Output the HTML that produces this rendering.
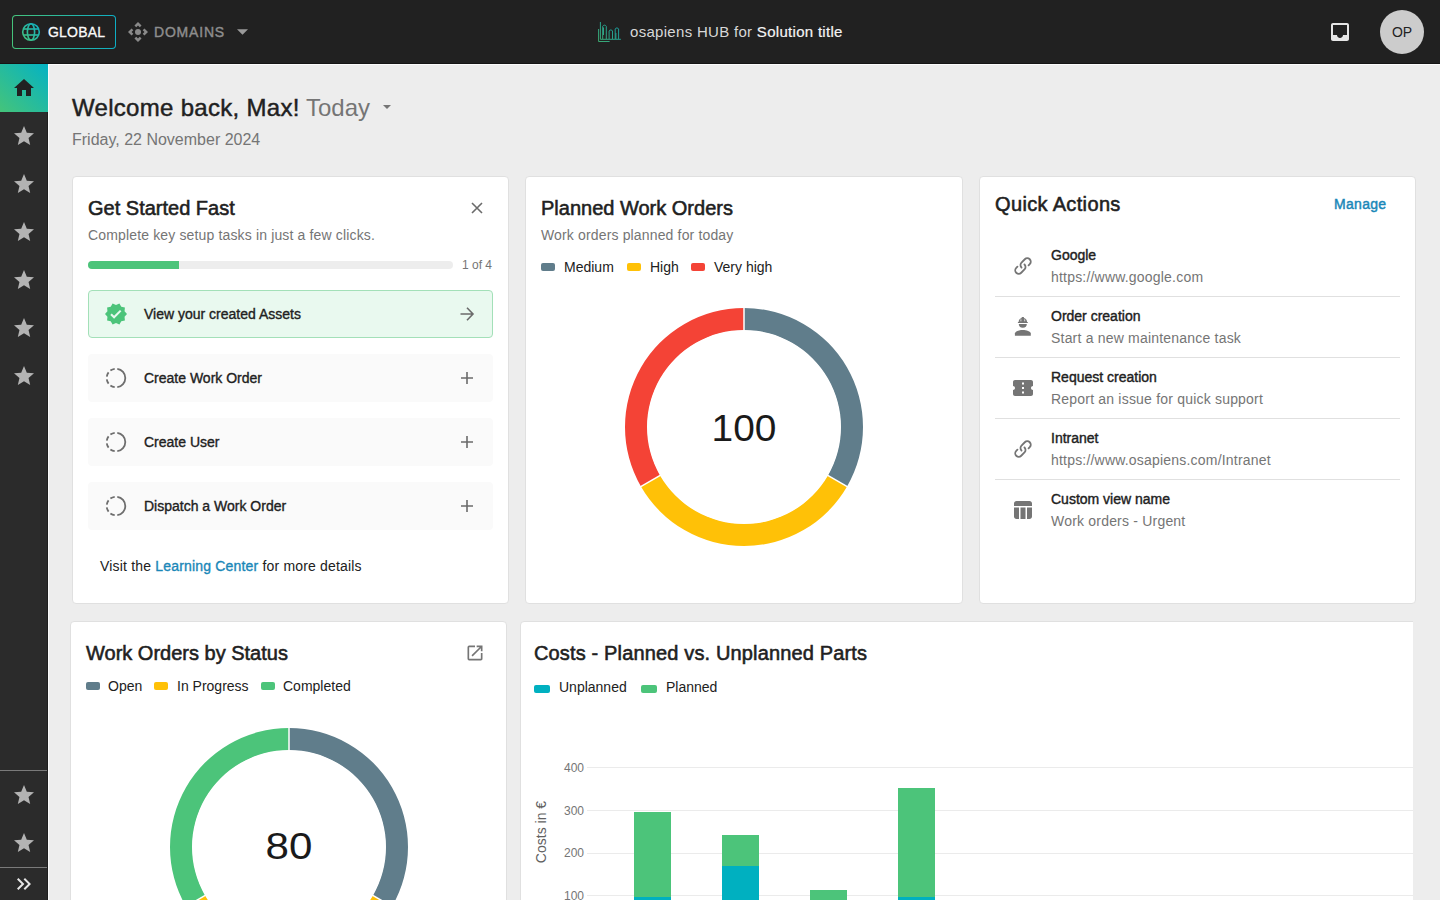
<!DOCTYPE html>
<html><head><meta charset="utf-8">
<style>
*{box-sizing:border-box;margin:0;padding:0}
html,body{width:1440px;height:900px;overflow:hidden;background:#ededed;font-family:"Liberation Sans",sans-serif;color:#212121}
.abs{position:absolute}
.t{position:absolute;white-space:nowrap;line-height:1}
#hdr{position:absolute;left:0;top:0;width:1440px;height:64px;background:#212121;border-bottom:1px solid #151515}
#side{position:absolute;left:0;top:64px;width:48px;height:836px;background:#2b2b2b;border-right:1px solid #1f1f1f}
#sideline{position:absolute;left:48px;top:64px;width:1px;height:836px;background:#fbfbfb}
#topline{position:absolute;left:48px;top:64px;width:1392px;height:1px;background:#fbfbfb}
.card{position:absolute;background:#fff;border:1px solid #e0e0e0;border-radius:4px;overflow:hidden}
.title{font-size:20px;color:#212121;-webkit-text-stroke:0.55px #212121}
.sub{font-size:14px;color:#757575;letter-spacing:0.15px}
.item{position:absolute;left:15px;width:405px;height:48px;border-radius:4px;background:#fafafa}
.itxt{font-size:14px;color:#212121;-webkit-text-stroke:0.35px #212121;letter-spacing:0px}
.sw{position:absolute;width:14px;height:8px;border-radius:2px}
.leg{font-size:14px;color:#212121}
.qt{font-size:14px;color:#212121;-webkit-text-stroke:0.4px #212121}
.qs{font-size:14px;color:#757575;letter-spacing:0.2px}
.div{position:absolute;left:15px;width:406px;height:1px;background:#e0e0e0}
</style></head>
<body>
<!-- HEADER -->
<div id="hdr">
  <div class="abs" style="left:12px;top:15px;width:104px;height:34px;border-radius:4px;padding:1px;background:linear-gradient(90deg,#46c37b,#0eaec4)">
    <div style="width:100%;height:100%;background:#212121;border-radius:3px"></div>
  </div>
  <svg class="abs" style="left:21px;top:22px" width="20" height="20" viewBox="0 0 20 20">
    <defs><linearGradient id="gg" gradientUnits="userSpaceOnUse" x1="2" y1="18" x2="18" y2="2"><stop offset="0" stop-color="#46c37b"/><stop offset="1" stop-color="#0eaec4"/></linearGradient></defs>
    <g fill="none" stroke="url(#gg)" stroke-width="1.6">
      <circle cx="10" cy="10" r="8.3"/>
      <ellipse cx="10" cy="10" rx="3.6" ry="8.3"/>
      <line x1="2" y1="7" x2="18" y2="7"/><line x1="2" y1="13" x2="18" y2="13"/>
    </g>
  </svg>
  <div class="t" style="left:48px;top:25px;font-size:14px;color:#fafafa;-webkit-text-stroke:0.3px #fafafa;letter-spacing:0.2px">GLOBAL</div>
  <svg class="abs" style="left:126px;top:20px" width="24" height="24" viewBox="0 0 24 24"><path fill="#8a8a8a" d="M5.54 8.46L2 12l3.54 3.54 1.76-1.77L5.54 12l1.76-1.77zm6.46 10l-1.77-1.76-1.77 1.76L12 22l3.54-3.54-1.77-1.76zm6.46-10l-1.76 1.77L18.46 12l-1.76 1.77 1.76 1.77L22 12zm-10-2.92l1.77 1.76L12 5.54l1.77 1.76 1.77-1.76L12 2z"/><circle fill="#8a8a8a" cx="12" cy="12" r="3"/></svg>
  <div class="t" style="left:154px;top:25px;font-size:14px;color:#8e8e8e;-webkit-text-stroke:0.4px #8e8e8e;letter-spacing:0.8px">DOMAINS</div>
  <svg class="abs" style="left:237px;top:29px" width="11" height="6" viewBox="0 0 10 5"><path fill="#9a9a9a" d="M0 0h10L5 5z"/></svg>
  <!-- logo -->
  <svg class="abs" style="left:597px;top:21px" width="25" height="22" viewBox="0 0 25 22">
    <defs><linearGradient id="lg" gradientUnits="userSpaceOnUse" x1="0" y1="22" x2="25" y2="0"><stop offset="0" stop-color="#46c37b"/><stop offset="1" stop-color="#0eaec4"/></linearGradient></defs>
    <g fill="none" stroke="url(#lg)" stroke-width="1" opacity="0.85">
      <path d="M1.6 8v12.5h11"/>
      <path d="M3.4 1v17.3h20.5"/>
      <path d="M5.7 18V5.3a2 2 0 0 1 3.6 0V18"/>
      <path d="M6.5 6.5v7.5"/>
      <path d="M12.1 18V10a1.9 1.9 0 0 1 3.4 0V18"/>
      <path d="M18.2 18V8a1.9 1.9 0 0 1 3.4 0V18"/>
      <path d="M18.9 12v6"/>
    </g>
  </svg>
  <div class="t" style="left:630px;top:24px;font-size:15px;color:#d8d8d8;letter-spacing:0.3px">osapiens HUB for <span style="color:#f4f4f4;-webkit-text-stroke:0.2px #f4f4f4">Solution title</span></div>
  <svg class="abs" style="left:1328px;top:20px" width="24" height="24" viewBox="0 0 24 24"><path fill="#e6e6e6" d="M19 3H4.99c-1.11 0-1.98.9-1.98 2L3 19c0 1.1.88 2 1.99 2H19c1.1 0 2-.9 2-2V5c0-1.1-.9-2-2-2zm0 12h-4c0 1.66-1.35 3-3 3s-3-1.34-3-3H4.99V5H19v10z"/></svg>
  <div class="abs" style="left:1380px;top:10px;width:44px;height:44px;border-radius:50%;background:#cccccc"></div>
  <div class="t" style="left:1380px;top:25px;width:44px;text-align:center;font-size:14px;color:#222">OP</div>
</div>

<!-- SIDEBAR -->
<div id="side">
  <div class="abs" style="left:0;top:0;width:48px;height:48px;background:linear-gradient(to top right,#45c47a,#04b2c4)"></div>
  <svg class="abs" style="left:12px;top:12px" width="24" height="24" viewBox="0 0 24 24"><path fill="#212121" d="M10 20v-6h4v6h5v-8h3L12 3 2 12h3v8z"/></svg>
  <svg class="abs" style="left:12px;top:60px" width="24" height="24" viewBox="0 0 24 24"><path fill="#b3b3b3" d="M12 17.27L18.18 21l-1.64-7.03L22 9.24l-7.19-.61L12 2 9.19 8.63 2 9.24l5.46 4.73L5.82 21z"/></svg>
  <svg class="abs" style="left:12px;top:108px" width="24" height="24" viewBox="0 0 24 24"><path fill="#b3b3b3" d="M12 17.27L18.18 21l-1.64-7.03L22 9.24l-7.19-.61L12 2 9.19 8.63 2 9.24l5.46 4.73L5.82 21z"/></svg>
  <svg class="abs" style="left:12px;top:156px" width="24" height="24" viewBox="0 0 24 24"><path fill="#b3b3b3" d="M12 17.27L18.18 21l-1.64-7.03L22 9.24l-7.19-.61L12 2 9.19 8.63 2 9.24l5.46 4.73L5.82 21z"/></svg>
  <svg class="abs" style="left:12px;top:204px" width="24" height="24" viewBox="0 0 24 24"><path fill="#b3b3b3" d="M12 17.27L18.18 21l-1.64-7.03L22 9.24l-7.19-.61L12 2 9.19 8.63 2 9.24l5.46 4.73L5.82 21z"/></svg>
  <svg class="abs" style="left:12px;top:252px" width="24" height="24" viewBox="0 0 24 24"><path fill="#b3b3b3" d="M12 17.27L18.18 21l-1.64-7.03L22 9.24l-7.19-.61L12 2 9.19 8.63 2 9.24l5.46 4.73L5.82 21z"/></svg>
  <svg class="abs" style="left:12px;top:300px" width="24" height="24" viewBox="0 0 24 24"><path fill="#b3b3b3" d="M12 17.27L18.18 21l-1.64-7.03L22 9.24l-7.19-.61L12 2 9.19 8.63 2 9.24l5.46 4.73L5.82 21z"/></svg>
  <div class="abs" style="left:0;top:706px;width:47px;height:1px;background:#7a7a7a"></div>
  <svg class="abs" style="left:12px;top:719px" width="24" height="24" viewBox="0 0 24 24"><path fill="#b3b3b3" d="M12 17.27L18.18 21l-1.64-7.03L22 9.24l-7.19-.61L12 2 9.19 8.63 2 9.24l5.46 4.73L5.82 21z"/></svg>
  <svg class="abs" style="left:12px;top:767px" width="24" height="24" viewBox="0 0 24 24"><path fill="#b3b3b3" d="M12 17.27L18.18 21l-1.64-7.03L22 9.24l-7.19-.61L12 2 9.19 8.63 2 9.24l5.46 4.73L5.82 21z"/></svg>
  <div class="abs" style="left:0;top:803px;width:47px;height:1px;background:#7a7a7a"></div>
  <svg class="abs" style="left:12px;top:808px" width="24" height="24" viewBox="0 0 24 24"><path fill="#e6e6e6" d="M6.41 6L5 7.41 9.58 12 5 16.59 6.41 18l6-6z M13 6l-1.41 1.41L16.17 12l-4.58 4.59L13 18l6-6z"/></svg>
</div>
<div id="sideline"></div>
<div id="topline"></div>

<!-- WELCOME -->
<div class="t" style="left:72px;top:96px;font-size:24px;color:#212121;-webkit-text-stroke:0.45px #212121;letter-spacing:0.3px">Welcome back, Max!</div>
<div class="t" style="left:306px;top:96px;font-size:24px;color:#757575">Today</div>
<svg class="abs" style="left:383px;top:105px" width="8" height="4" viewBox="0 0 10 5"><path fill="#757575" d="M0 0h10L5 5z"/></svg>
<div class="t" style="left:72px;top:132px;font-size:16px;color:#757575">Friday, 22 November 2024</div>

<!-- CARDS ROW 1 -->
<div class="card" style="left:72px;top:176px;width:437px;height:428px"></div>
<div class="card" style="left:525px;top:176px;width:438px;height:428px"></div>
<div class="card" style="left:979px;top:176px;width:437px;height:428px"></div>

<!-- CARD 1: Get Started Fast -->
<div class="t title" style="left:88px;top:198px">Get Started Fast</div>
<svg class="abs" style="left:471px;top:202px" width="12" height="12" viewBox="0 0 12 12"><path stroke="#6b6b6b" stroke-width="1.6" d="M1 1L11 11M11 1L1 11"/></svg>
<div class="t sub" style="left:88px;top:228px">Complete key setup tasks in just a few clicks.</div>
<div class="abs" style="left:88px;top:261px;width:365px;height:8px;border-radius:4px;background:#ededed"></div>
<div class="abs" style="left:88px;top:261px;width:91px;height:8px;border-radius:4px 0 0 4px;background:#4cc47a"></div>
<div class="t" style="left:462px;top:259px;font-size:12px;color:#757575">1 of 4</div>

<div class="abs" style="left:88px;top:290px;width:405px;height:48px;border-radius:4px;background:#e9f9ef;border:1px solid #a3e0b8"></div>
<svg class="abs" style="left:104px;top:302px" width="24" height="24" viewBox="0 0 24 24"><path fill="#4cc47a" d="M23 12l-2.44-2.79.34-3.69-3.61-.82-1.89-3.2L12 2.96 8.6 1.5 6.71 4.69 3.1 5.5l.34 3.7L1 12l2.44 2.79-.34 3.7 3.61.82L8.6 22.5l3.4-1.47 3.4 1.46 1.89-3.19 3.61-.82-.34-3.69L23 12zm-12.91 4.72l-3.8-3.81 1.48-1.48 2.32 2.33 5.85-5.87 1.48 1.48-7.33 7.35z"/></svg>
<div class="t itxt" style="left:144px;top:307px">View your created Assets</div>
<svg class="abs" style="left:459px;top:306px" width="16" height="16" viewBox="0 0 16 16"><path fill="none" stroke="#6b6b6b" stroke-width="1.6" d="M1.5 8H14M8 1.8L14 8L8 14.2"/></svg>

<div class="abs" style="left:88px;top:354px;width:405px;height:48px;border-radius:4px;background:#fafafa"></div>
<div class="abs" style="left:88px;top:418px;width:405px;height:48px;border-radius:4px;background:#fafafa"></div>
<div class="abs" style="left:88px;top:482px;width:405px;height:48px;border-radius:4px;background:#fafafa"></div>
<svg class="abs" style="left:104px;top:366px" width="24" height="24" viewBox="0 0 24 24"><use href="#dash"/></svg>
<svg class="abs" style="left:104px;top:430px" width="24" height="24" viewBox="0 0 24 24"><use href="#dash"/></svg>
<svg class="abs" style="left:104px;top:494px" width="24" height="24" viewBox="0 0 24 24"><use href="#dash"/></svg>
<div class="t itxt" style="left:144px;top:371px">Create Work Order</div>
<div class="t itxt" style="left:144px;top:435px">Create User</div>
<div class="t itxt" style="left:144px;top:499px">Dispatch a Work Order</div>
<svg class="abs" style="left:459px;top:370px" width="16" height="16" viewBox="0 0 16 16"><path stroke="#6b6b6b" stroke-width="1.6" d="M8 2v12M2 8h12"/></svg>
<svg class="abs" style="left:459px;top:434px" width="16" height="16" viewBox="0 0 16 16"><path stroke="#6b6b6b" stroke-width="1.6" d="M8 2v12M2 8h12"/></svg>
<svg class="abs" style="left:459px;top:498px" width="16" height="16" viewBox="0 0 16 16"><path stroke="#6b6b6b" stroke-width="1.6" d="M8 2v12M2 8h12"/></svg>
<div class="t" style="left:100px;top:559px;font-size:14px;color:#212121;letter-spacing:0.18px">Visit the <span style="color:#1a87b8;-webkit-text-stroke:0.35px #1a87b8">Learning Center</span> for more details</div>

<!-- CARD 2: Planned Work Orders -->
<div class="t title" style="left:541px;top:198px">Planned Work Orders</div>
<div class="t sub" style="left:541px;top:228px">Work orders planned for today</div>
<div class="sw" style="left:541px;top:263px;background:#607d8b"></div>
<div class="t leg" style="left:564px;top:260px">Medium</div>
<div class="sw" style="left:627px;top:263px;background:#ffc107"></div>
<div class="t leg" style="left:650px;top:260px">High</div>
<div class="sw" style="left:691px;top:263px;background:#f44336"></div>
<div class="t leg" style="left:714px;top:260px">Very high</div>
<svg class="abs" style="left:624px;top:307px" width="240" height="240" viewBox="0 0 240 240">
  <path fill="#607d8b" d="M120.00 1.00A119.0 119.0 0 0 1 223.06 179.50L204.00 168.50A97.0 97.0 0 0 0 120.00 23.00Z"/>
  <path fill="#ffc107" d="M223.06 179.50A119.0 119.0 0 0 1 16.94 179.50L36.00 168.50A97.0 97.0 0 0 0 204.00 168.50Z"/>
  <path fill="#f44336" d="M16.94 179.50A119.0 119.0 0 0 1 120.00 1.00L120.00 23.00A97.0 97.0 0 0 0 36.00 168.50Z"/>
  <g stroke="#fff" stroke-width="1.5"><path d="M120 120V0"/><path d="M120 120L225 180.6"/><path d="M120 120L15 180.6"/></g>
  <circle cx="120" cy="120" r="96.5" fill="#fff"/>
</svg>
<div class="t" style="left:644px;top:411px;width:200px;text-align:center;font-size:36px;color:#1a1a1a;transform:scaleX(1.08)">100</div>

<!-- CARD 3: Quick Actions -->
<div class="t title" style="left:995px;top:194px;letter-spacing:0.35px">Quick Actions</div>
<div class="t" style="left:1334px;top:197px;font-size:14px;color:#1a87b8;-webkit-text-stroke:0.45px #1a87b8;letter-spacing:0.3px">Manage</div>
<div class="abs" style="left:995px;top:296px;width:405px;height:1px;background:#e0e0e0"></div>
<div class="abs" style="left:995px;top:357px;width:405px;height:1px;background:#e0e0e0"></div>
<div class="abs" style="left:995px;top:418px;width:405px;height:1px;background:#e0e0e0"></div>
<div class="abs" style="left:995px;top:479px;width:405px;height:1px;background:#e0e0e0"></div>
<div class="t qt" style="left:1051px;top:248px">Google</div>
<div class="t qs" style="left:1051px;top:270px">https://www.google.com</div>
<div class="t qt" style="left:1051px;top:309px">Order creation</div>
<div class="t qs" style="left:1051px;top:331px">Start a new maintenance task</div>
<div class="t qt" style="left:1051px;top:370px">Request creation</div>
<div class="t qs" style="left:1051px;top:392px">Report an issue for quick support</div>
<div class="t qt" style="left:1051px;top:431px">Intranet</div>
<div class="t qs" style="left:1051px;top:453px">https://www.osapiens.com/Intranet</div>
<div class="t qt" style="left:1051px;top:492px">Custom view name</div>
<div class="t qs" style="left:1051px;top:514px">Work orders - Urgent</div>
<svg class="abs" style="left:1011px;top:254px" width="24" height="24" viewBox="0 0 24 24"><use href="#link"/></svg>
<svg class="abs" style="left:1011px;top:315px" width="24" height="24" viewBox="0 0 24 24"><g fill="#757575"><path d="M3.9 20.8V18.6C3.9 16.1 8.4 14.9 11.8 14.9S19.8 16.1 19.8 18.6V20.8Z"/><path d="M7.8 9.1H15.8A4 3.7 0 0 1 7.8 9.1Z"/><path d="M6.9 7.9H16.8V7H16.1C16 4.6 14.6 3.3 12.9 2.9V2H10.7V2.9C9 3.3 7.7 4.6 7.6 7H6.9Z"/></g><g stroke="#fff" stroke-width="0.7"><path d="M9.9 4.3V6.3M13.7 4.3V6.3"/></g></svg>
<svg class="abs" style="left:1011px;top:376px" width="24" height="24" viewBox="0 0 24 24"><path fill="#757575" d="M22 10V6c0-1.11-.9-2-2-2H4c-1.1 0-1.99.89-1.99 2v4c1.1 0 1.99.9 1.99 2s-.89 2-2 2v4c0 1.1.9 2 2 2h16c1.1 0 2-.9 2-2v-4c-1.1 0-2-.9-2-2s.9-2 2-2zm-9 7.5h-2v-2h2v2zm0-4.5h-2v-2h2v2zm0-4.5h-2v-2h2v2z"/></svg>
<svg class="abs" style="left:1011px;top:437px" width="24" height="24" viewBox="0 0 24 24"><use href="#link"/></svg>
<svg class="abs" style="left:1011px;top:498px" width="24" height="24" viewBox="0 0 24 24"><path fill="#757575" d="M3 5.5C3 4.12 4.12 3 5.5 3h13C19.88 3 21 4.12 21 5.5V8H3zM3 9.5h5V21H5.5C4.12 21 3 19.88 3 18.5zM9.5 9.5h5V21h-5zM16 9.5h5v9c0 1.38-1.12 2.5-2.5 2.5H16z"/></svg>

<!-- CARDS ROW 2 -->
<div class="card" style="left:70px;top:621px;width:437px;height:320px"></div>
<div class="card" style="left:520px;top:621px;width:960px;height:320px;border-radius:4px 0 0 0"></div>

<!-- CARD 4 -->
<div class="t title" style="left:86px;top:643px">Work Orders by Status</div>
<svg class="abs" style="left:465px;top:643px" width="20" height="20" viewBox="0 0 24 24"><path fill="#757575" d="M19 19H5V5h7V3H5a2 2 0 0 0-2 2v14a2 2 0 0 0 2 2h14c1.1 0 2-.9 2-2v-7h-2v7zM14 3v2h3.59l-9.83 9.83 1.41 1.41L19 6.41V10h2V3h-7z"/></svg>
<div class="sw" style="left:86px;top:682px;background:#607d8b"></div>
<div class="t leg" style="left:108px;top:679px">Open</div>
<div class="sw" style="left:154px;top:682px;background:#ffc107"></div>
<div class="t leg" style="left:177px;top:679px">In Progress</div>
<div class="sw" style="left:261px;top:682px;background:#4cc47a"></div>
<div class="t leg" style="left:283px;top:679px">Completed</div>
<svg class="abs" style="left:169px;top:727px" width="240" height="240" viewBox="0 0 240 240">
  <path fill="#607d8b" d="M120.00 1.00A119.0 119.0 0 0 1 223.06 179.50L204.00 168.50A97.0 97.0 0 0 0 120.00 23.00Z"/>
  <path fill="#ffc107" d="M223.06 179.50A119.0 119.0 0 0 1 16.94 179.50L36.00 168.50A97.0 97.0 0 0 0 204.00 168.50Z"/>
  <path fill="#4cc47a" d="M16.94 179.50A119.0 119.0 0 0 1 120.00 1.00L120.00 23.00A97.0 97.0 0 0 0 36.00 168.50Z"/>
  <g stroke="#fff" stroke-width="1.5"><path d="M120 120V0"/><path d="M120 120L225 180.6"/><path d="M120 120L15 180.6"/></g>
  <circle cx="120" cy="120" r="96.5" fill="#fff"/>
</svg>
<div class="t" style="left:189px;top:829px;width:200px;text-align:center;font-size:36px;color:#1a1a1a;transform:scaleX(1.17)">80</div>

<!-- CARD 5 -->
<div class="t title" style="left:534px;top:643px;letter-spacing:0.15px">Costs - Planned vs. Unplanned Parts</div>
<div class="sw" style="left:534px;top:685px;width:16px;background:#00b0c0"></div>
<div class="t leg" style="left:559px;top:680px">Unplanned</div>
<div class="sw" style="left:641px;top:685px;width:16px;background:#4cc47a"></div>
<div class="t leg" style="left:666px;top:680px">Planned</div>
<div class="abs" style="left:587px;top:767px;width:826px;height:1px;background:#ebebeb"></div>
<div class="abs" style="left:587px;top:810px;width:826px;height:1px;background:#ebebeb"></div>
<div class="abs" style="left:587px;top:853px;width:826px;height:1px;background:#ebebeb"></div>
<div class="abs" style="left:587px;top:895px;width:826px;height:1px;background:#ebebeb"></div>
<div class="t" style="left:540px;top:762px;width:44px;text-align:right;font-size:12px;color:#757575">400</div>
<div class="t" style="left:540px;top:805px;width:44px;text-align:right;font-size:12px;color:#757575">300</div>
<div class="t" style="left:540px;top:847px;width:44px;text-align:right;font-size:12px;color:#757575">200</div>
<div class="t" style="left:540px;top:890px;width:44px;text-align:right;font-size:12px;color:#757575">100</div>
<div class="t" style="left:491px;top:825px;width:100px;text-align:center;font-size:14px;color:#616161;transform:rotate(-90deg)">Costs in €</div>
<div class="abs" style="left:634px;top:812px;width:37px;height:85px;background:#4cc47a"></div>
<div class="abs" style="left:634px;top:897px;width:37px;height:10px;background:#00b0c0"></div>
<div class="abs" style="left:722px;top:835px;width:37px;height:31px;background:#4cc47a"></div>
<div class="abs" style="left:722px;top:866px;width:37px;height:40px;background:#00b0c0"></div>
<div class="abs" style="left:810px;top:890px;width:37px;height:20px;background:#4cc47a"></div>
<div class="abs" style="left:898px;top:788px;width:37px;height:109px;background:#4cc47a"></div>
<div class="abs" style="left:898px;top:897px;width:37px;height:10px;background:#00b0c0"></div>

<div class="abs" style="left:1413px;top:610px;width:27px;height:290px;background:#ededed"></div>

<svg width="0" height="0" style="position:absolute">
  <defs>
    <g id="dash" fill="none" stroke="#6e6e6e" stroke-width="1.8"><path d="M13.29 2.79A9.3 9.3 0 0 1 13.29 21.21"/><path d="M10.71 21.21A9.3 9.3 0 0 1 6.40 19.43"/><path d="M4.57 17.60A9.3 9.3 0 0 1 2.79 13.29"/><path d="M2.79 10.71A9.3 9.3 0 0 1 4.57 6.40"/><path d="M6.40 4.57A9.3 9.3 0 0 1 10.71 2.79"/></g>
    <g id="link" fill="none" stroke="#757575" stroke-width="1.8" stroke-linecap="round" transform="matrix(0,-1,-1,0,24,24)">
      <path d="M10.5 13.5a3.5 3.5 0 0 0 4.95 0l3.3-3.3a3.5 3.5 0 0 0-4.95-4.95l-1.2 1.2"/>
      <path d="M13.5 10.5a3.5 3.5 0 0 0-4.95 0l-3.3 3.3a3.5 3.5 0 0 0 4.95 4.95l1.2-1.2"/>
    </g>
  </defs>
</svg>
</body></html>
